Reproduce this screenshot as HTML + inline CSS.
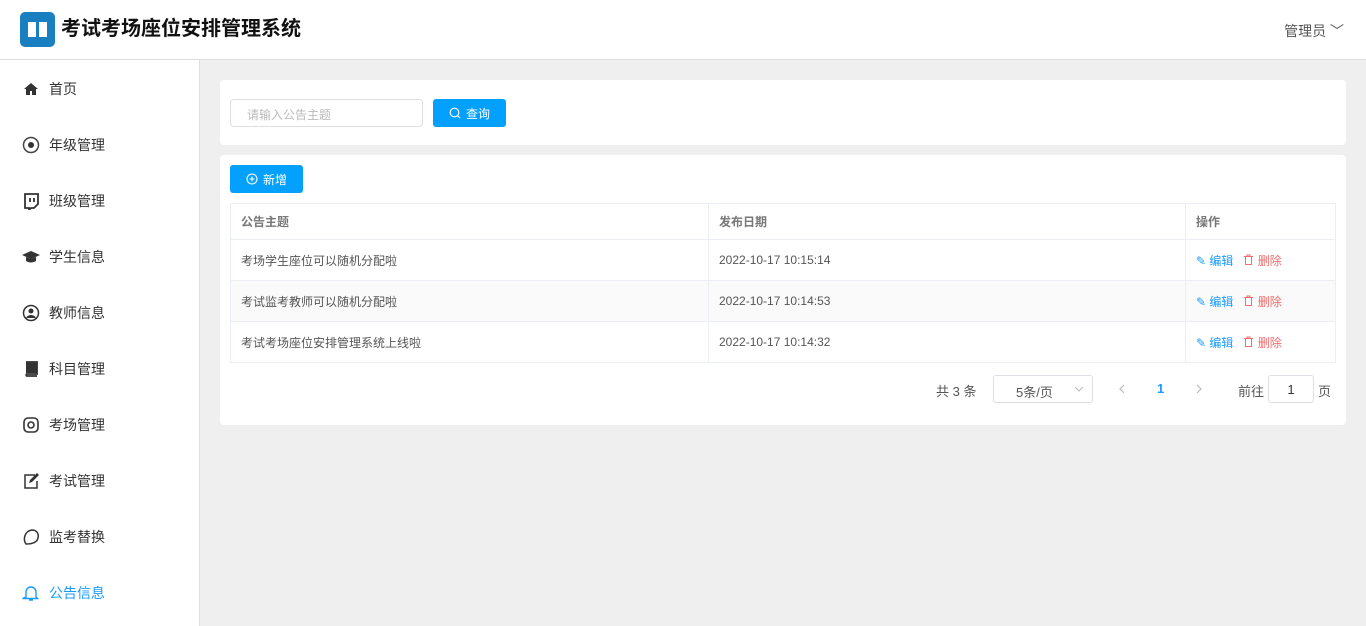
<!DOCTYPE html><html><head><meta charset="utf-8"><style>
*{box-sizing:border-box;margin:0;padding:0}
body{width:1366px;height:626px;overflow:hidden;background:#efefef;font-family:"Liberation Sans","Noto Sans CJK SC",sans-serif;font-size:13px;color:#333;position:relative}
.hd{position:absolute;left:0;top:0;width:1366px;height:60px;background:#fff;border-bottom:1px solid #ddd}
.logo{position:absolute;left:20px;top:12px;width:35px;height:35px;background:#1a7fc1;border-radius:5px}
.title{position:absolute;left:61px;top:15px;font-size:20px;line-height:28px;font-weight:bold;color:#111}
.user{position:absolute;right:22px;top:21px;font-size:14px;color:#555}
.sb{position:absolute;left:0;top:60px;width:200px;height:566px;background:#fff;border-right:1px solid #e0e0e0}
.mi{position:absolute;left:22px;height:20px;font-size:14px;color:#333;display:flex;align-items:center}
.mi svg{width:18px;height:18px;margin-right:9px}
.mi.act{color:#1a9bfc}
.card{position:absolute;left:220px;width:1126px;background:#fff;border-radius:4px}
.inp{position:absolute;left:10px;top:19px;width:193px;height:28px;border:1px solid #dcdfe6;border-radius:4px;color:#bbb;padding:6px 16px;font-size:12px}
.btn{position:absolute;background:#03a0fe;color:#fff;border-radius:3px;font-size:12px;display:flex;align-items:center;justify-content:center;gap:5px}
table{position:absolute;left:10px;top:48px;width:1106px;border-collapse:collapse;font-size:12px}
td,th{border:1px solid #ebeef5;text-align:left;padding:0 10px;color:#555}
th{height:36px;font-weight:bold;color:#777}
td{height:41px}
tr.s td{background:#fafafa}
.e{color:#1a9bfc}.d{color:#f56c6c;margin-left:10px}
.pg{position:absolute;font-size:13px;color:#555}
</style></head><body>
<div class="hd"><div class="logo"><svg width="35" height="35" viewBox="0 0 35 35"><path d="M8 10h8v15H8zM19 10h8v15h-8z" fill="#fff"/></svg></div><div class="title">考试考场座位安排管理系统</div><div class="user">管理员 ﹀</div></div>
<div class="sb">
<div class="mi" style="top:19px"><svg viewBox="0 0 18 18"><path d="M2 9L9 3l7 6h-2v6h-4v-4H8v4H4V9z" fill="#333"/></svg>首页</div>
<div class="mi" style="top:75px"><svg viewBox="0 0 18 18"><circle cx="9" cy="9" r="7.5" fill="none" stroke="#444" stroke-width="1.5"/><circle cx="9" cy="9" r="3" fill="#333"/></svg>年级管理</div>
<div class="mi" style="top:131px"><svg viewBox="0 0 18 18"><path d="M3 2h13v10l-4 4H9l-2 2v-2H3z" fill="none" stroke="#333" stroke-width="1.8"/><path d="M8 6v4M12 6v4" stroke="#333" stroke-width="1.8"/></svg>班级管理</div>
<div class="mi" style="top:187px"><svg viewBox="0 0 18 18"><path d="M0 7l9-4 9 4-9 4z M4 9v4c3 2 7 2 10 0V9l-5 2z" fill="#333"/></svg>学生信息</div>
<div class="mi" style="top:243px"><svg viewBox="0 0 18 18"><circle cx="9" cy="9" r="7.5" fill="none" stroke="#333" stroke-width="1.5"/><circle cx="9" cy="7" r="2.5" fill="#333"/><path d="M4 14c2-4 8-4 10 0" fill="#333"/></svg>教师信息</div>
<div class="mi" style="top:299px"><svg viewBox="0 0 18 18"><path d="M4 2h11v12H5c-1 0-1 2 0 2h10" fill="none" stroke="#333" stroke-width="1.8"/><path d="M4 2h11v11H4z" fill="#333"/></svg>科目管理</div>
<div class="mi" style="top:355px"><svg viewBox="0 0 18 18"><rect x="2" y="2" width="14" height="14" rx="4" fill="none" stroke="#333" stroke-width="1.6"/><circle cx="9" cy="9" r="3" fill="none" stroke="#333" stroke-width="1.6"/></svg>考场管理</div>
<div class="mi" style="top:411px"><svg viewBox="0 0 18 18"><path d="M13 3H3v13h12V9" fill="none" stroke="#333" stroke-width="1.5"/><path d="M7 11l1-3 7-7 2 2-7 7z" fill="#333"/></svg>考试管理</div>
<div class="mi" style="top:467px"><svg viewBox="0 0 18 18"><path d="M4 16C1 12 2 3 10 2c5 0 7 4 6 8-1 5-7 6-12 6z" fill="none" stroke="#333" stroke-width="1.5"/></svg>监考替换</div>
<div class="mi act" style="top:523px"><svg viewBox="0 0 18 18"><path d="M4 13V8a5 5 0 0110 0v5l1.5 1.5h-15zM7 16h4" fill="none" stroke="#1a9bfc" stroke-width="1.4"/></svg>公告信息</div>
</div>
<div class="card" style="top:80px;height:65px"><div class="inp">请输入公告主题</div><div class="btn" style="left:213px;top:19px;width:73px;height:28px"><svg width="12" height="12" viewBox="0 0 12 12"><circle cx="5.5" cy="5.5" r="4.3" fill="none" stroke="#fff" stroke-width="1.2"/><path d="M8.5 8.5l2.5 2.5" stroke="#fff" stroke-width="1.2"/></svg>查询</div></div>
<div class="card" style="top:155px;height:270px">
<div class="btn" style="left:10px;top:10px;width:73px;height:28px"><svg width="12" height="12" viewBox="0 0 12 12"><circle cx="6" cy="6" r="5" fill="none" stroke="#fff" stroke-width="1.1"/><path d="M6 3.5v5M3.5 6h5" stroke="#fff" stroke-width="1.1"/></svg>新增</div>
<table><tr><th style="width:478px">公告主题</th><th style="width:477px">发布日期</th><th>操作</th></tr>
<tr><td>考场学生座位可以随机分配啦</td><td>2022-10-17 10:15:14</td><td><span class="e">✎ 编辑</span><span class="d"><svg width="11" height="11" viewBox="0 0 11 11"><path d="M1 2.5h9M4 2.5V1h3v1.5M2.5 2.5v8h6v-8" fill="none" stroke="#f56c6c"/></svg> 删除</span></td></tr>
<tr class="s"><td>考试监考教师可以随机分配啦</td><td>2022-10-17 10:14:53</td><td><span class="e">✎ 编辑</span><span class="d"><svg width="11" height="11" viewBox="0 0 11 11"><path d="M1 2.5h9M4 2.5V1h3v1.5M2.5 2.5v8h6v-8" fill="none" stroke="#f56c6c"/></svg> 删除</span></td></tr>
<tr><td>考试考场座位安排管理系统上线啦</td><td>2022-10-17 10:14:32</td><td><span class="e">✎ 编辑</span><span class="d"><svg width="11" height="11" viewBox="0 0 11 11"><path d="M1 2.5h9M4 2.5V1h3v1.5M2.5 2.5v8h6v-8" fill="none" stroke="#f56c6c"/></svg> 删除</span></td></tr></table>
<div class="pg" style="left:716px;top:226px">共 3 条</div>
<div style="position:absolute;left:773px;top:220px;width:100px;height:28px;border:1px solid #dcdfe6;border-radius:3px;font-size:13px;color:#555;padding:6px 0 0 22px">5条/页<svg style="position:absolute;right:8px;top:10px" width="10" height="7" viewBox="0 0 10 7"><path d="M1 1l4 4 4-4" fill="none" stroke="#bbb"/></svg></div>
<svg style="position:absolute;left:898px;top:229px" width="7" height="10" viewBox="0 0 7 10"><path d="M6 1L2 5l4 4" fill="none" stroke="#bbb" stroke-width="1.2"/></svg>
<div class="pg" style="left:937px;top:226px;color:#1a9bfc;font-weight:bold">1</div>
<svg style="position:absolute;left:976px;top:229px" width="7" height="10" viewBox="0 0 7 10"><path d="M1 1l4 4-4 4" fill="none" stroke="#bbb" stroke-width="1.2"/></svg>
<div class="pg" style="left:1018px;top:226px">前往</div>
<div style="position:absolute;left:1048px;top:220px;width:46px;height:28px;border:1px solid #dcdfe6;border-radius:3px;text-align:center;padding-top:6px;font-size:13px">1</div>
<div class="pg" style="left:1098px;top:226px">页</div>
</div>
</body></html>
